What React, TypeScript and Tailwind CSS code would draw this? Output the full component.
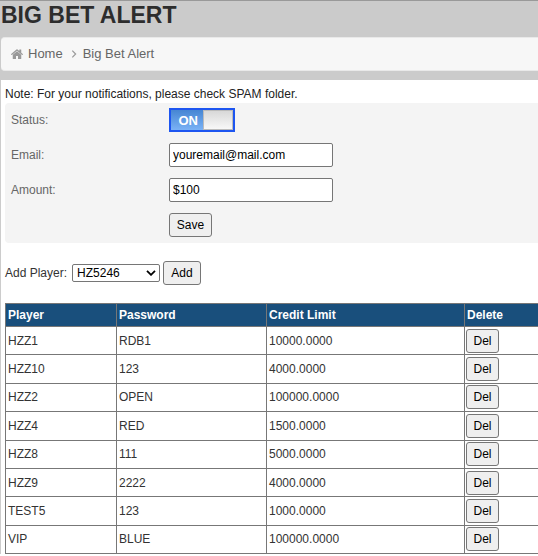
import React, { useState } from 'react';

interface Player {
  name: string;
  password: string;
  creditLimit: number;
}

const initialPlayers: Player[] = [
  { name: 'HZZ1', password: 'RDB1', creditLimit: 10000 },
  { name: 'HZZ10', password: '123', creditLimit: 4000 },
  { name: 'HZZ2', password: 'OPEN', creditLimit: 100000 },
  { name: 'HZZ4', password: 'RED', creditLimit: 1500 },
  { name: 'HZZ8', password: '111', creditLimit: 5000 },
  { name: 'HZZ9', password: '2222', creditLimit: 4000 },
  { name: 'TEST5', password: '123', creditLimit: 1000 },
  { name: 'VIP', password: 'BLUE', creditLimit: 100000 },
];

const buttonClass = 'rounded-[3px] border border-[#767676] bg-[#efefef] text-black hover:bg-[#e3e3e3]';
const inputClass = 'h-6 w-[164px] rounded-[2px] border border-[#767676] bg-white px-[3px] text-black';

function Breadcrumb() {
  return (
    <nav className="ml-px flex h-[34px] items-center rounded-l-[4px] border-y border-[#e9e9e9] bg-[#f7f7f7] pl-[10px] text-[13px] text-[#666]">
      <svg viewBox="0 0 24 20" className="mr-[5px] h-[10px] w-3 fill-[#999]" aria-hidden="true">
        <path d="M12 4.600 3.500 11.700V19q0 1 1 1H10v-6h4v6h5.500q1 0 1-1v-7.300z" />
        <path d="m23.700 10-3.200-2.700V1.300q0-.5-.5-.5h-2.900q-.5 0-.5.5v2.800L13.100 1q-1.100-.9-2.200 0L.3 10q-.4.400-.1.800l.9 1.100q.4.400.8.100L12 3.500l10.100 8.500q.4.300.8-.1l.9-1.100q.3-.4-.1-.8z" />
      </svg>
      <a href="#home">Home</a>
      <svg viewBox="0 0 6 8" className="mr-[6px] ml-2 h-2 w-[6px] fill-none stroke-[#999]" aria-hidden="true">
        <path d="m1.300.7 3.300 3.300-3.300 3.300" strokeWidth="1.200" />
      </svg>
      <span>Big Bet Alert</span>
    </nav>
  );
}

function StatusSwitch({ on, onChange }: { on: boolean; onChange: (on: boolean) => void }) {
  return (
    <label className="flex h-6 w-[66px] cursor-pointer border-2 border-[#1d55f0] bg-[#5a9ae6]">
      <input
        id="status"
        type="checkbox"
        className="sr-only"
        checked={on}
        onChange={e => onChange(e.target.checked)}
      />
      <span className={`flex w-8 items-center justify-end bg-linear-to-b from-[#4686d3] to-[#7ab2f6] pt-[2px] pr-[5px] text-[13px] font-bold text-white ${on ? '' : 'order-2'}`}>
        {on ? 'ON' : 'OFF'}
      </span>
      <span className="flex-1 border border-[#bbb] bg-linear-to-b from-[#d8d8d8] to-[#f8f8f8]" />
    </label>
  );
}

export default function App() {
  const [enabled, setEnabled] = useState(true);
  const [email, setEmail] = useState('youremail@mail.com');
  const [amount, setAmount] = useState('$100');
  const [players, setPlayers] = useState(initialPlayers);

  const removePlayer = (name: string) => {
    setPlayers(players.filter(p => p.name !== name));
  };

  return (
    <div className="min-h-screen bg-white font-['Liberation_Sans',Arial,sans-serif] text-[12px] leading-4 text-[#333]">
      <header className="border-t border-[#999] bg-[#cbcbcb] pb-[9px]">
        <h1 className="h-9 pl-px text-[23px] leading-[28px] font-bold text-[#2d2d2d]">BIG BET ALERT</h1>
        <Breadcrumb />
      </header>

      <main className="border-l border-[#ccc] pt-[6px] pl-1">
        <p className="text-[#222]">Note: For your notifications, please check SPAM folder.</p>

        {/* Alert settings */}
        <form
          className="mt-px grid grid-cols-[158px_1fr] gap-y-[11px] rounded-l-[4px] bg-[#f4f4f4] pt-[5px] pb-[6px] pl-[6px] text-[#666]"
          onSubmit={e => e.preventDefault()}
        >
          <label htmlFor="status" className="pt-1">Status:</label>
          <StatusSwitch on={enabled} onChange={setEnabled} />
          <label htmlFor="email" className="pt-1">Email:</label>
          <input id="email" className={inputClass} value={email} onChange={e => setEmail(e.target.value)} />
          <label htmlFor="amount" className="pt-1">Amount:</label>
          <input id="amount" className={inputClass} value={amount} onChange={e => setAmount(e.target.value)} />
          <button type="submit" className={`${buttonClass} col-start-2 h-6 w-[43px]`}>Save</button>
        </form>

        {/* Add player */}
        <div className="mt-[18px] flex items-center">
          <label htmlFor="player">Add Player:</label>
          <span className="ml-[5px] grid w-[88px] items-center">
            <select
              id="player"
              className="col-start-1 row-start-1 h-[18px] appearance-none rounded-[2px] border border-[#767676] bg-white pl-1 leading-4 text-black"
            >
              <option>HZ5246</option>
            </select>
            <svg viewBox="0 0 10 6" className="pointer-events-none col-start-1 row-start-1 mr-1 h-[6px] w-[10px] justify-self-end fill-none stroke-black" aria-hidden="true">
              <path d="m1 .8 4 4 4-4" strokeWidth="1.800" />
            </svg>
          </span>
          <button type="button" className={`${buttonClass} ml-[3px] h-6 w-[38px]`}>Add</button>
        </div>

        <table className="mt-[18px] h-[251px] w-full table-fixed border-collapse border-y border-l border-[#777]">
          <thead>
            <tr className="h-[23px] bg-[#194f7c] text-left text-white">
              <th className="w-[111px] border border-[#777] px-[2px] pb-px">Player</th>
              <th className="w-[150px] border border-[#777] px-[2px] pb-px">Password</th>
              <th className="w-[198px] border border-[#777] px-[2px] pb-px">Credit Limit</th>
              <th className="border-y border-l border-[#777] px-[2px] pb-px">Delete</th>
            </tr>
          </thead>
          <tbody>
            {players.map(player => (
              <tr key={player.name}>
                <td className="border border-[#777] px-[2px]">{player.name}</td>
                <td className="border border-[#777] px-[2px]">{player.password}</td>
                <td className="border border-[#777] px-[2px]">{player.creditLimit.toFixed(4)}</td>
                <td className="border-y border-l border-[#777] px-px">
                  <button
                    type="button"
                    className={`${buttonClass} block h-6 w-[33px]`}
                    onClick={() => removePlayer(player.name)}
                  >
                    Del
                  </button>
                </td>
              </tr>
            ))}
          </tbody>
        </table>
      </main>
    </div>
  );
}
